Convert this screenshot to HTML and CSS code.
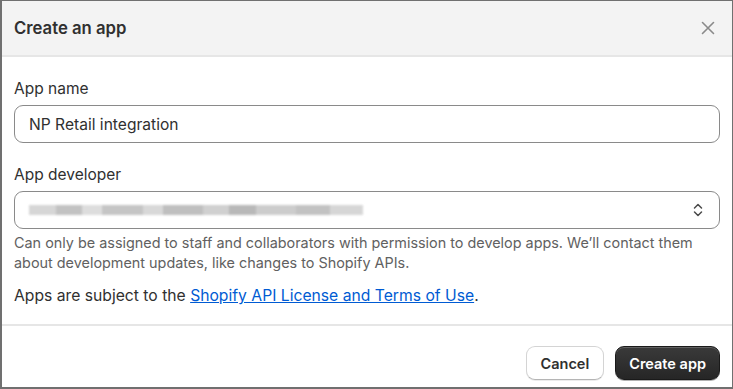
FILE: index.html
```html
<!DOCTYPE html>
<html lang="en">
	<head>
		<title>Create an app</title>
		<link rel="stylesheet" href="styles.css">
	</head>
	<body>
		<div class="modal">
			<div class="modal-header">
				<h2>Create an app</h2>
				<button class="close-btn" aria-label="Close">
					<svg width="16" height="16" viewBox="0 0 16 16"><path d="M2.5 2.5 L13.5 13.5 M13.5 2.5 L2.5 13.5" stroke="#8a8a8a" stroke-width="1.6" stroke-linecap="round" fill="none"/></svg>
				</button>
			</div>
			<div class="modal-body">
				<div class="field">
					<label for="app_name">App name</label>
					<input type="text" id="app_name" value="NP Retail integration">
				</div>
				<div class="field field-dev">
					<label>App developer</label>
					<div class="select">
						<span class="blurred"></span>
						<svg class="chevrons" width="14" height="18" viewBox="0 0 14 18"><path d="M3.5 7 L7 3.5 L10.5 7 M3.5 11 L7 14.5 L10.5 11" stroke="#4a4a4a" stroke-width="1.5" stroke-linecap="round" stroke-linejoin="round" fill="none"/></svg>
					</div>
					<p class="help">Can only be assigned to staff and collaborators with permission to develop apps. We’ll contact them about development updates, like changes to Shopify APIs.</p>
				</div>
				<p class="terms">Apps are subject to the <a href="#">Shopify API License and Terms of Use</a>.</p>
			</div>
			<div class="modal-footer">
				<button class="btn btn-cancel">Cancel</button>
				<button class="btn btn-primary">Create app</button>
			</div>
		</div>
	</body>
</html>
```
FILE: styles.css
```css
body {
	margin: 0;
	font-family: Inter, "Noto Sans", sans-serif;
	color: #303030;
}
.modal {
	width: 733px;
	height: 389px;
	box-sizing: border-box;
	border: 1px solid #707070;
	border-left-width: 2px;
	border-bottom-width: 2px;
	background: white;
	display: flex;
	flex-direction: column;
}
.modal-header {
	height: 54px;
	background: #f3f3f3;
	border-bottom: 2px solid #e6e6e6;
	display: flex;
	align-items: center;
	justify-content: space-between;
	padding: 0 12px 0 12px;
}
.modal-header h2 {
	margin: 0;
	font-size: 16.7px;
	font-weight: 600;
	color: #303030;
}
.close-btn {
	background: none;
	border: none;
	padding: 4px;
	display: flex;
	cursor: pointer;
}
.modal-body {
	flex: 1;
	padding: 22px 12px 0 12px;
	border-bottom: 2px solid #e6e6e6;
}
.field {
	margin-bottom: 22px;
}
.field-dev {
	margin-bottom: 13px;
}
.field label {
	display: block;
	font-size: 15.5px;
	line-height: 20px;
	margin-bottom: 6px;
}
input {
	width: 100%;
	box-sizing: border-box;
	height: 38px;
	padding: 0 14px;
	font-family: inherit;
	font-size: 15.6px;
	color: #303030;
	border: 1px solid #8a8a8a;
	border-radius: 9px;
}
.select {
	height: 38px;
	box-sizing: border-box;
	border: 1px solid #8a8a8a;
	border-radius: 9px;
	display: flex;
	align-items: center;
	justify-content: space-between;
	padding: 0 14px 0 14px;
}
.blurred {
	width: 334px;
	height: 10px;
	background: linear-gradient(90deg, #cfcfcf 0 8%, #b8b8b8 8% 16%, #d8d8d8 16% 22%, #bcbcbc 22% 34%, #d2d2d2 34% 40%, #b4b4b4 40% 52%, #c8c8c8 52% 60%, #acacac 60% 68%, #c4c4c4 68% 80%, #b8b8b8 80% 90%, #d0d0d0 90%);
	opacity: 0.85;
	filter: blur(0.8px);
}
.help {
	margin: 4px 0 0 0;
	font-size: 14.4px;
	line-height: 20px;
	color: #616161;
}
.terms {
	margin: 0;
	font-size: 15.7px;
	line-height: 20px;
}
.terms a {
	color: #005bd3;
}
.modal-footer {
	height: 61px;
	box-sizing: border-box;
	display: flex;
	justify-content: flex-end;
	align-items: flex-start;
	gap: 11px;
	padding: 20px 12px 0 12px;
}
.btn {
	height: 34px;
	padding: 0 13px;
	font-family: inherit;
	font-size: 14.5px;
	font-weight: 600;
	color: #303030;
	background: white;
	border: 1px solid #d4d4d4;
	border-bottom-color: #b5b5b5;
	border-radius: 9px;
	box-shadow: 0 1px 0 rgba(0, 0, 0, 0.08);
}
.btn-cancel {
	padding: 0 14px;
}
.btn-primary {
	color: white;
	background: linear-gradient(#3a3a3a, #262626);
	border: 1px solid #1a1a1a;
	box-shadow: inset 0 1px 0 rgba(255, 255, 255, 0.2), 0 1px 0 rgba(0, 0, 0, 0.3);
}
```
